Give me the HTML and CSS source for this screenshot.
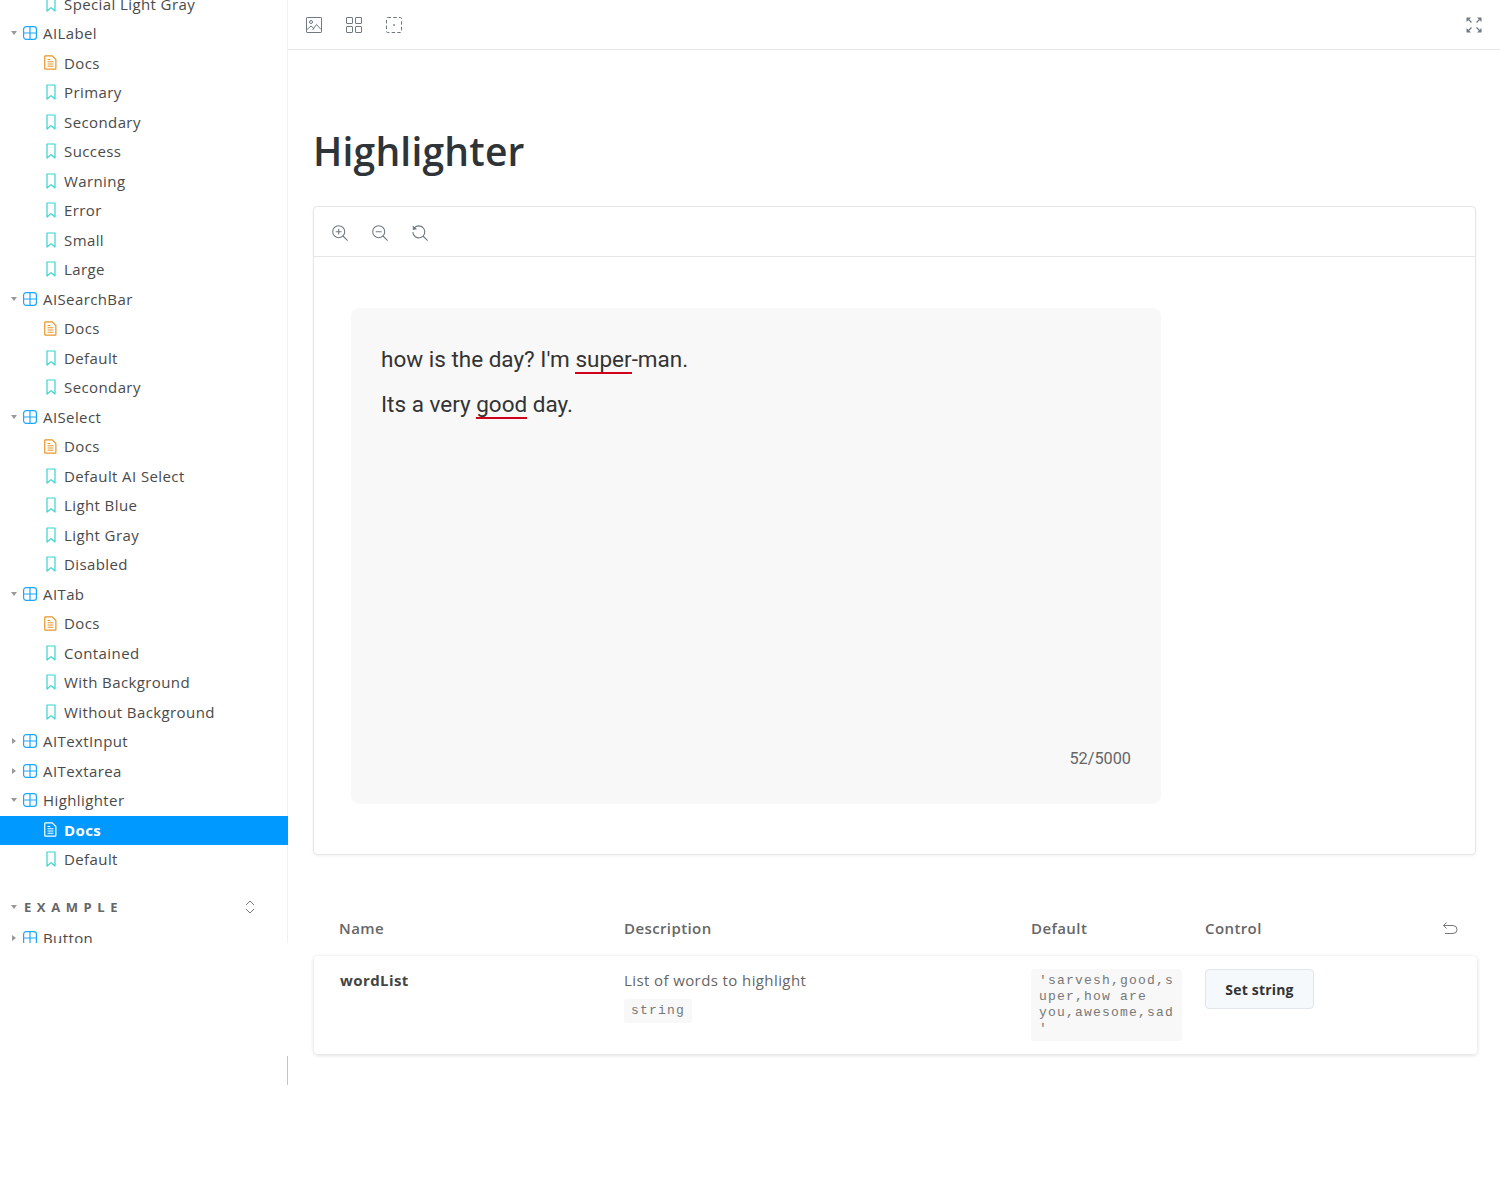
FILE: index.html
```html
<!doctype html>
<html lang="en">
<head>
    <meta charset="utf-8">
    <title>Highlighter</title>
    <link rel="stylesheet" href="styles.css">
</head>
<body>
    <svg class="defs" width="0" height="0">
        <symbol id="i-comp" viewBox="0 0 14 14"><rect x=".6" y=".6" width="12.8" height="12.8" rx="2.6" fill="none" stroke="currentColor" stroke-width="1.2"/><path d="M7 1v12M1 7h12" fill="none" stroke="currentColor" stroke-width="1.2"/></symbol>
        <symbol id="i-doc" viewBox="0 0 14 16"><path d="M1.6.8h7.2l4 4v9.6a.8.8 0 0 1-.8.8H1.6a.8.8 0 0 1-.8-.8V1.6a.8.8 0 0 1 .8-.8z" fill="none" stroke="currentColor" stroke-width="1.3"/><path d="M3.8 7.2h6.4M3.8 9.600h6.4M3.8 12h6.4M3.8 4.8h3" fill="none" stroke="currentColor" stroke-width="1.1"/></symbol>
        <symbol id="i-story" viewBox="0 0 10 16"><path d="M1 1h8v14L5 11.6 1 15z" fill="none" stroke="currentColor" stroke-width="1.2" stroke-linejoin="round"/></symbol>
        <symbol id="i-image" viewBox="0 0 16 16"><rect x=".5" y=".5" width="15" height="15" rx=".6" fill="none" stroke="currentColor"/><circle cx="5" cy="5" r="1.5" fill="none" stroke="currentColor"/><path d="M1 12.5l4-3.5 3 2.5M6.500 13l4-5.500 4.500 5" fill="none" stroke="currentColor"/></symbol>
        <symbol id="i-grid" viewBox="0 0 16 16"><path d="M1 .5h5a.5.500 0 0 1 .5.5v5a.5.500 0 0 1-.5.500H1a.5.500 0 0 1-.5-.5V1a.5.500 0 0 1 .5-.5zM10 .5h5a.5.500 0 0 1 .5.5v5a.5.500 0 0 1-.5.500h-5a.5.500 0 0 1-.5-.5V1a.5.500 0 0 1 .5-.5zM1 9.500h5a.5.500 0 0 1 .5.5v5a.5.500 0 0 1-.5.500H1a.5.500 0 0 1-.5-.5v-5a.5.500 0 0 1 .5-.5zM10 9.500h5a.5.500 0 0 1 .5.5v5a.5.500 0 0 1-.5.500h-5a.5.500 0 0 1-.5-.5v-5a.5.500 0 0 1 .5-.5z" fill="none" stroke="currentColor"/></symbol>
        <symbol id="i-frame" viewBox="0 0 16 16"><rect x=".5" y=".5" width="15" height="15" rx="1" fill="none" stroke="currentColor" stroke-dasharray="3.500 2.200"/><rect x="7.200" y="7.200" width="1.600" height="1.600" fill="currentColor"/></symbol>
        <symbol id="i-expand" viewBox="0 0 16 16"><path d="M5.500 5.500L1.500 1.500M10.500 5.500l4-4M5.500 10.500l-4 4M10.500 10.500l4 4" fill="none" stroke="currentColor" stroke-width="1.200"/><path d="M.5.500h4.500L.5 5zM15.500.500v4.500L11 .5zM.5 15.500V11L5 15.500zM15.500 15.500H11L15.500 11z" fill="currentColor"/></symbol>
        <symbol id="i-zoomin" viewBox="0 0 16 16"><circle cx="6.700" cy="6.700" r="6" fill="none" stroke="currentColor" stroke-width="1.100"/><path d="M11 11l4.600 4.600M6.700 3.800v5.800M3.800 6.700h5.800" fill="none" stroke="currentColor" stroke-width="1.100"/></symbol>
        <symbol id="i-zoomout" viewBox="0 0 16 16"><circle cx="6.700" cy="6.700" r="6" fill="none" stroke="currentColor" stroke-width="1.100"/><path d="M11 11l4.600 4.600M3.800 6.700h5.800" fill="none" stroke="currentColor" stroke-width="1.100"/></symbol>
        <symbol id="i-zoomreset" viewBox="0 0 16 16"><path d="M2.200 3A6 6 0 1 1 .8 7M11 11l4.600 4.600" fill="none" stroke="currentColor" stroke-width="1.100"/><path d="M.7.600l.2 4.400 4.200-.8z" fill="currentColor"/></symbol>
        <symbol id="i-undo" viewBox="0 0 16 12"><path d="M1.500 3.500H11a4 4 0 0 1 0 8H3M4.500.5l-3 3 3 3" fill="none" stroke="currentColor"/></symbol>
        <symbol id="i-updown" viewBox="0 0 10 14"><path d="M1 5l4-4 4 4M1 9l4 4 4-4" fill="none" stroke="currentColor"/></symbol>
    </svg>

    <aside class="sidebar">
        <nav class="tree">
            <a class="row leaf"><svg class="ic story"><use href="#i-story"/></svg>Special Light Gray</a>
            <a class="row group open"><i class="caret"></i><svg class="ic comp"><use href="#i-comp"/></svg>AILabel</a>
            <a class="row leaf"><svg class="ic doc"><use href="#i-doc"/></svg>Docs</a>
            <a class="row leaf"><svg class="ic story"><use href="#i-story"/></svg>Primary</a>
            <a class="row leaf"><svg class="ic story"><use href="#i-story"/></svg>Secondary</a>
            <a class="row leaf"><svg class="ic story"><use href="#i-story"/></svg>Success</a>
            <a class="row leaf"><svg class="ic story"><use href="#i-story"/></svg>Warning</a>
            <a class="row leaf"><svg class="ic story"><use href="#i-story"/></svg>Error</a>
            <a class="row leaf"><svg class="ic story"><use href="#i-story"/></svg>Small</a>
            <a class="row leaf"><svg class="ic story"><use href="#i-story"/></svg>Large</a>
            <a class="row group open"><i class="caret"></i><svg class="ic comp"><use href="#i-comp"/></svg>AISearchBar</a>
            <a class="row leaf"><svg class="ic doc"><use href="#i-doc"/></svg>Docs</a>
            <a class="row leaf"><svg class="ic story"><use href="#i-story"/></svg>Default</a>
            <a class="row leaf"><svg class="ic story"><use href="#i-story"/></svg>Secondary</a>
            <a class="row group open"><i class="caret"></i><svg class="ic comp"><use href="#i-comp"/></svg>AISelect</a>
            <a class="row leaf"><svg class="ic doc"><use href="#i-doc"/></svg>Docs</a>
            <a class="row leaf"><svg class="ic story"><use href="#i-story"/></svg>Default AI Select</a>
            <a class="row leaf"><svg class="ic story"><use href="#i-story"/></svg>Light Blue</a>
            <a class="row leaf"><svg class="ic story"><use href="#i-story"/></svg>Light Gray</a>
            <a class="row leaf"><svg class="ic story"><use href="#i-story"/></svg>Disabled</a>
            <a class="row group open"><i class="caret"></i><svg class="ic comp"><use href="#i-comp"/></svg>AITab</a>
            <a class="row leaf"><svg class="ic doc"><use href="#i-doc"/></svg>Docs</a>
            <a class="row leaf"><svg class="ic story"><use href="#i-story"/></svg>Contained</a>
            <a class="row leaf"><svg class="ic story"><use href="#i-story"/></svg>With Background</a>
            <a class="row leaf"><svg class="ic story"><use href="#i-story"/></svg>Without Background</a>
            <a class="row group"><i class="caret"></i><svg class="ic comp"><use href="#i-comp"/></svg>AITextInput</a>
            <a class="row group"><i class="caret"></i><svg class="ic comp"><use href="#i-comp"/></svg>AITextarea</a>
            <a class="row group open"><i class="caret"></i><svg class="ic comp"><use href="#i-comp"/></svg>Highlighter</a>
            <a class="row leaf selected"><svg class="ic doc"><use href="#i-doc"/></svg>Docs</a>
            <a class="row leaf"><svg class="ic story"><use href="#i-story"/></svg>Default</a>

            <div class="section-head">
                <i class="caret"></i><span class="section-name">EXAMPLE</span>
                <svg class="updown"><use href="#i-updown"/></svg>
            </div>
            <a class="row group"><i class="caret"></i><svg class="ic comp"><use href="#i-comp"/></svg>Button</a>
        </nav>
        <div class="scroll-mark"></div>
    </aside>

    <main class="main">
        <header class="topbar">
            <div class="tools">
                <svg class="tool"><use href="#i-image"/></svg>
                <svg class="tool"><use href="#i-grid"/></svg>
                <svg class="tool"><use href="#i-frame"/></svg>
            </div>
            <svg class="tool"><use href="#i-expand"/></svg>
        </header>

        <div class="content">
            <h1 class="title">Highlighter</h1>

            <section class="preview">
                <div class="preview-bar">
                    <svg class="tool"><use href="#i-zoomin"/></svg>
                    <svg class="tool"><use href="#i-zoomout"/></svg>
                    <svg class="tool"><use href="#i-zoomreset"/></svg>
                </div>
                <div class="preview-body">
                    <div class="editor">
                        <div class="editor-text">
                            <p>how is the day? I'm <span class="hl">super</span>-man.</p>
                            <p>Its a very <span class="hl">good</span> day.</p>
                        </div>
                        <div class="counter">52/5000</div>
                    </div>
                </div>
            </section>

            <section class="args">
                <div class="args-head">
                    <div class="cell-name">Name</div>
                    <div>Description</div>
                    <div>Default</div>
                    <div class="head-control">Control <svg class="undo"><use href="#i-undo"/></svg></div>
                </div>
                <div class="args-row">
                    <div class="cell-name arg-name">wordList</div>
                    <div class="arg-desc">
                        <div>List of words to highlight</div>
                        <code class="code type">string</code>
                    </div>
                    <div><code class="code default">'sarvesh,good,super,how are you,awesome,sad'</code></div>
                    <div><button class="set-btn">Set string</button></div>
                </div>
            </section>
        </div>
    </main>
</body>
</html>
```

FILE: styles.css
```css
html, body {
    margin: 0;
    height: 100%;
}

body {
    display: flex;
    height: 1184px;
    overflow: hidden;
    background: #fff;
    color: #333;
    font-family: "Open Sans", "Noto Sans", sans-serif;
    font-size: 15px;
    letter-spacing: .4px;
}

.defs { position: absolute; }

/* sidebar */
.sidebar {
    display: flex;
    flex-direction: column;
    flex: none;
    width: 288px;
}

.tree {
    height: 943px;
    overflow: hidden;
    box-shadow: inset -1px 0 #f1f1f1;
}

.row {
    display: flex;
    align-items: center;
    box-sizing: border-box;
    height: 29.5px;
    padding-bottom: 1.5px;
    color: #4a4a4a;
    white-space: nowrap;
}

.row:first-child { margin-top: -10.5px; }

.group { padding-left: 12px; }
.leaf  { padding-left: 44px; }

.selected {
    background: #0099ff;
    color: #fff;
    font-weight: 700;
}

.caret {
    flex: none;
    width: 0;
    height: 0;
    margin-right: 7px;
    border-style: solid;
    border-width: 3px 0 3px 4px;
    border-color: transparent transparent transparent #999;
}

.open { padding-left: 11px; }

.open .caret,
.section-head .caret {
    margin-right: 6px;
    border-width: 4px 3px 0;
    border-color: #999 transparent transparent;
}

.ic { flex: none; }

.comp  { width: 14px; height: 14px; margin-right: 6px; color: #1ea7fd; }
.doc   { width: 13px; height: 15px; margin-right: 7px; color: #e8952a; }
.story { width: 10px; height: 16px; margin: 0 8px 0 2px; color: #37d5d3; }
.selected .doc { color: #fff; }

.section-head {
    display: flex;
    align-items: center;
    box-sizing: border-box;
    height: 32px;
    margin-top: 17px;
    padding: 0 0 2px 11px;
    color: #666;
}

.section-name {
    margin-left: 1px;
    font-size: 13px;
    font-weight: 700;
    letter-spacing: .43em;
}

.updown {
    width: 10px;
    height: 14px;
    margin-left: auto;
    margin-right: 33px;
    color: #777;
}

.scroll-mark {
    align-self: flex-end;
    width: 1px;
    height: 29px;
    margin-top: 113px;
    background: #a9cde6;
}

/* main */
.main {
    flex: 1;
    min-width: 0;
}

.topbar {
    display: flex;
    align-items: center;
    justify-content: space-between;
    height: 49px;
    padding: 0 18px;
    border-bottom: 1px solid #e6e6e6;
}

.tools {
    display: flex;
    gap: 24px;
}

.tool {
    display: block;
    width: 16px;
    height: 16px;
    color: #6f7a80;
}

.content { padding: 0 23px 0 26px; }

.title {
    margin: 73px 0 27px -1px;
    color: #2e3438;
    font-size: 39px;
    font-weight: 600;
    letter-spacing: .2px;
    line-height: 56px;
}

.preview {
    margin: 0 1px 0 -1px;
    border: 1px solid #e6e6e6;
    border-radius: 4px;
    box-shadow: 0 1px 3px rgba(0,0,0,.06);
}

.preview-bar {
    display: flex;
    align-items: center;
    gap: 24px;
    box-sizing: border-box;
    height: 50px;
    padding: 2px 0 0 18px;
    border-bottom: 1px solid #e6e6e6;
}

.preview-body { padding: 51px 37px 50px; }

.editor {
    display: flex;
    flex-direction: column;
    justify-content: space-between;
    box-sizing: border-box;
    width: 810px;
    height: 496px;
    padding: 38px 30px 36px;
    border-radius: 8px;
    background: #f8f8f8;
    color: #333;
    font-family: Roboto, sans-serif;
    letter-spacing: 0;
}

.editor-text { font-size: 22.5px; }

.editor-text p {
    margin: 0 0 18px;
    line-height: 27px;
}

.hl { border-bottom: 2px solid #d0021b; }

.counter {
    align-self: flex-end;
    color: #666;
    font-size: 16.3px;
}

/* args table */
.args { margin-top: 50px; }

.args-head,
.args-row {
    display: grid;
    grid-template-columns: 310px 407px 174px 1fr;
}

.args-head {
    align-items: center;
    height: 46px;
    margin-bottom: 5px;
    color: #666;
    font-weight: 600;
}

.head-control {
    display: flex;
    align-items: center;
    justify-content: space-between;
    padding-right: 19px;
}

.undo {
    width: 16px;
    height: 12px;
    color: #777;
}

.cell-name { padding-left: 25px; }

.args-row {
    box-sizing: border-box;
    height: 98px;
    padding-top: 13px;
    border-radius: 4px;
    box-shadow: 0 1px 4px rgba(0,0,0,.16);
}

.arg-name {
    padding-top: 1px;
    padding-left: 26px;
    color: #444;
    font-weight: 700;
}

.arg-desc {
    padding-top: 1px;
    color: #666;
}

.code {
    display: inline-block;
    box-sizing: border-box;
    border-radius: 3px;
    background: #f8f8f8;
    color: #777;
    font-family: "Liberation Mono", monospace;
    font-size: 13px;
    letter-spacing: 1.2px;
    line-height: 16px;
}

.type {
    margin-top: 9px;
    padding: 4px 7px;
}

.default {
    width: 151px;
    padding: 4px 7px 4px 8px;
    overflow-wrap: anywhere;
}

.set-btn {
    width: 109px;
    height: 40px;
    padding: 0;
    border: 1px solid #e0e6ec;
    border-radius: 4px;
    background: #f6f9fc;
    color: #333;
    font-family: "Open Sans", sans-serif;
    font-size: 14px;
    font-weight: 700;
    letter-spacing: .2px;
}
```
